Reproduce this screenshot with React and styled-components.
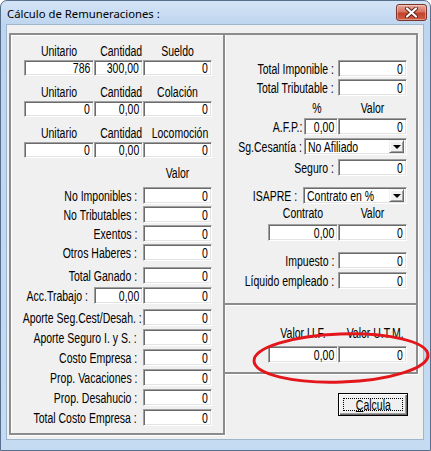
import React from "react";
import styled, { createGlobalStyle } from "styled-components";

const GlobalStyle = createGlobalStyle`
  html, body {
    margin: 0;
    padding: 0;
    background: #ffffff;
  }
  body {
    font-family: "Liberation Sans Narrow", "Arial Narrow", "Liberation Sans", sans-serif;
    font-size: 14px;
    color: #000;
  }
`;

// the dialog font is a tall narrow sans; squeeze Liberation Sans to its width
const narrow = (origin) => `
  display: inline-block;
  flex-shrink: 0;
  transform: scaleX(0.75);
  transform-origin: ${origin};
`;

const Window = styled.div`
  position: relative;
  width: 431px;
  height: 451px;
  box-sizing: border-box;
  border: 1px solid #556f8c;
  border-radius: 7px 7px 0 0;
  background: linear-gradient(to bottom, #d4e4f6 0px, #bed5ef 24px, #c4dbf2 100%);
  overflow: hidden;
`;

const TitleBar = styled.div`
  height: 24px;
  box-sizing: border-box;
  display: flex;
  align-items: flex-start;
  justify-content: space-between;
  padding: 3px 3px 0 6px;
`;

const Title = styled.span`
  font-family: "Noto Sans", "Open Sans", sans-serif;
  font-size: 11.3px;
  line-height: 20px;
`;

const CloseButton = styled.div`
  width: 31px;
  height: 17px;
  box-sizing: border-box;
  border: 1px solid #7a3327;
  border-radius: 3px;
  background: linear-gradient(to bottom, #e8aa9c 0%, #d7725f 45%, #c3432c 55%, #cf5d45 100%);
  box-shadow: inset 0 0 0 1px rgba(255, 255, 255, 0.35);
  display: flex;
  align-items: center;
  justify-content: center;
`;

const Client = styled.div`
  margin-left: 6px;
  width: 416px;
  height: 414px;
  box-sizing: border-box;
  background: #f0f0f0;
  box-shadow: 0 0 0 1px #9fb5cd;
  padding: 8px 0 0 2px;
  display: flex;
  align-items: flex-start;
`;

const LeftPanel = styled.div`
  width: 216px;
  height: 402px;
  box-sizing: border-box;
  border: 2px solid #8c8c8c;
  box-shadow: inset 1px 1px 0 #fff, 1px 1px 0 #fff;
  padding: 9px 11px 0 0;
  display: flex;
  flex-direction: column;
`;

const RightColumn = styled.div`
  width: 193px;
  display: flex;
  flex-direction: column;
`;

const RightBox = styled.div`
  height: ${(p) => p.$h}px;
  box-sizing: border-box;
  border-right: 2px solid #8c8c8c;
  border-bottom: 2px solid #8c8c8c;
  border-top: ${(p) => (p.$top ? "2px solid #8c8c8c" : "none")};
  box-shadow: 1px 1px 0 #fff;
  padding: ${(p) => p.$pt}px 9px 0 0;
  display: flex;
  flex-direction: column;
`;

const Headers = styled.div`
  display: grid;
  grid-template-columns: ${(p) => p.$cols};
  justify-content: end;
  margin-top: ${(p) => p.$mt || 0}px;
  line-height: 14px;
  height: 14px;
  white-space: nowrap;
`;

const Head = styled.span`
  ${narrow("center")}
  text-align: center;
  margin-left: ${(p) => p.$shift || 0}px;
`;

const Row = styled.div`
  display: flex;
  justify-content: flex-end;
  align-items: center;
  margin-top: ${(p) => p.$mt || 0}px;
`;

const Label = styled.span`
  ${narrow("right")}
  white-space: nowrap;
  margin-right: ${(p) => (p.$gap === undefined ? 6 : p.$gap)}px;
`;

const Field = styled.div`
  width: ${(p) => p.$w}px;
  height: ${(p) => p.$h || 17}px;
  flex-shrink: 0;
  box-sizing: border-box;
  background: #fff;
  border-top: 1px solid #a0a0a0;
  border-left: 1px solid #a0a0a0;
  border-right: 1px solid #fff;
  border-bottom: 1px solid #fff;
  box-shadow: inset 1px 1px 0 #6b6b6b, inset -1px -1px 0 #e3e3e3;
  display: flex;
  align-items: center;
  justify-content: flex-end;
  padding-right: 3px;
  white-space: nowrap;
  overflow: hidden;
`;

const Value = styled.span`
  ${narrow("right")}
`;

const Combo = styled(Field)`
  justify-content: space-between;
  padding: 0 2px 0 3px;
`;

const ComboText = styled.span`
  ${narrow("left")}
  flex: 1 1 0;
  min-width: 0;
`;

const DropButton = styled.div`
  width: 15px;
  height: 13px;
  flex-shrink: 0;
  box-sizing: border-box;
  background: #f0f0f0;
  border-top: 1px solid #f0f0f0;
  border-left: 1px solid #f0f0f0;
  border-right: 1px solid #696969;
  border-bottom: 1px solid #696969;
  box-shadow: inset 1px 1px 0 #fff, inset -1px -1px 0 #a0a0a0;
  display: flex;
  align-items: center;
  justify-content: center;
`;

const Arrow = styled.span`
  width: 0;
  height: 0;
  border-left: 4px solid transparent;
  border-right: 4px solid transparent;
  border-top: 4px solid #000;
  margin-top: 1px;
`;

const ButtonArea = styled.div`
  display: flex;
  justify-content: flex-end;
  padding: 19px 10px 0 0;
`;

const Button = styled.div`
  width: 70px;
  height: 23px;
  box-sizing: border-box;
  border: 1px solid #000;
  background: #f0f0f0;
  box-shadow: inset 1px 1px 0 #fff, inset -1px -1px 0 #696969, inset -2px -2px 0 #a0a0a0;
  padding: 4px;
  display: flex;
`;

const FocusRect = styled.div`
  flex: 1;
  border: 1px dotted #000;
  display: flex;
  align-items: center;
  justify-content: center;
`;

const ButtonText = styled.span`
  ${narrow("center")}
`;

const Overlay = styled.svg`
  position: absolute;
  left: 0;
  top: 0;
  pointer-events: none;
`;

const ValueRow = ({ label, value, mt, gap, pre }) => (
  <Row $mt={mt}>
    <Label $gap={gap}>{label}</Label>
    {pre !== undefined && (
      <Field $w={pre.w}>
        <Value>{pre.v}</Value>
      </Field>
    )}
    <Field $w={69}>
      <Value>{value}</Value>
    </Field>
  </Row>
);

const topGroups = [
  { heads: ["Unitario", "Cantidad", "Sueldo"], vals: ["786", "300,00", "0"], mt: 0 },
  { heads: ["Unitario", "Cantidad", "Colación"], vals: ["0", "0,00", "0"], mt: 9 },
  { heads: ["Unitario", "Cantidad", "Locomoción"], vals: ["0", "0,00", "0"], mt: 9 },
];

const leftRows = [
  { label: "No Imponibles :", mt: 7 },
  { label: "No Tributables :", mt: 2 },
  { label: "Exentos :", mt: 2 },
  { label: "Otros Haberes :", mt: 2 },
  { label: "Total Ganado :", mt: 6 },
  { label: "Acc.Trabajo :", mt: 3, pre: { w: 49, v: "0,00" } },
  { label: "Aporte Seg.Cest/Desah. :", mt: 5, gap: 1 },
  { label: "Aporte Seguro I. y S. :", mt: 3 },
  { label: "Costo Empresa :", mt: 3 },
  { label: "Prop. Vacaciones :", mt: 3 },
  { label: "Prop. Desahucio :", mt: 3 },
  { label: "Total Costo Empresa :", mt: 3 },
];

export default function App() {
  return (
    <>
      <GlobalStyle />
      <Window>
        <TitleBar>
          <Title>Cálculo de Remuneraciones :</Title>
          <CloseButton>
            <svg width="13" height="11" viewBox="0 0 13 11">
              <path d="M2 1.5 L11 9.5 M11 1.5 L2 9.5" stroke="#5a2219" strokeWidth="4" strokeLinecap="round" />
              <path d="M2 1.5 L11 9.5 M11 1.5 L2 9.5" stroke="#fff" strokeWidth="2.2" strokeLinecap="round" />
            </svg>
          </CloseButton>
        </TitleBar>
        <Client>
          <LeftPanel>
            {topGroups.map((g, i) => (
              <React.Fragment key={i}>
                <Headers $cols="70px 49px 69px" $mt={g.mt}>
                  {g.heads.map((h) => (
                    <Head key={h}>{h}</Head>
                  ))}
                </Headers>
                <Row $mt={2}>
                  {g.vals.map((v, j) => (
                    <Field key={j} $w={[70, 49, 69][j]} $h={16}>
                      <Value>{v}</Value>
                    </Field>
                  ))}
                </Row>
              </React.Fragment>
            ))}
            <Headers $cols="69px" $mt={8}>
              <Head>Valor</Head>
            </Headers>
            {leftRows.map((r) => (
              <ValueRow key={r.label} label={r.label} value="0" mt={r.mt} gap={r.gap} pre={r.pre} />
            ))}
          </LeftPanel>
          <RightColumn>
            <RightBox $h={272} $pt={25} $top>
              <ValueRow label="Total Imponible :" value="0" gap={4} />
              <ValueRow label="Total Tributable :" value="0" mt={2} gap={4} />
              <Headers $cols="34px 69px" $mt={5}>
                <Head $shift={-8}>%</Head>
                <Head>Valor</Head>
              </Headers>
              <ValueRow label="A.F.P.:" value="0" mt={3} gap={2} pre={{ w: 34, v: "0,00" }} />
              <Row $mt={3}>
                <Label $gap={2}>Sg.Cesantía :</Label>
                <Combo $w={103}>
                  <ComboText>No Afiliado</ComboText>
                  <DropButton>
                    <Arrow />
                  </DropButton>
                </Combo>
              </Row>
              <ValueRow label="Seguro :" value="0" mt={4} gap={4} />
              <Row $mt={11}>
                <Label $gap={6}>ISAPRE :</Label>
                <Combo $w={104}>
                  <ComboText>Contrato en %</ComboText>
                  <DropButton>
                    <Arrow />
                  </DropButton>
                </Combo>
              </Row>
              <Headers $cols="70px 69px" $mt={2}>
                <Head>Contrato</Head>
                <Head>Valor</Head>
              </Headers>
              <Row $mt={4}>
                <Field $w={70}>
                  <Value>0,00</Value>
                </Field>
                <Field $w={69}>
                  <Value>0</Value>
                </Field>
              </Row>
              <ValueRow label="Impuesto :" value="0" mt={11} gap={4} />
              <ValueRow label="Líquido empleado :" value="0" mt={3} gap={4} />
            </RightBox>
            <RightBox $h={69} $pt={21}>
              <Headers $cols="70px 69px">
                <Head>Valor U.F.</Head>
                <Head>Valor U.T.M.</Head>
              </Headers>
              <Row $mt={6}>
                <Field $w={70}>
                  <Value>0,00</Value>
                </Field>
                <Field $w={69}>
                  <Value>0</Value>
                </Field>
              </Row>
            </RightBox>
            <ButtonArea>
              <Button>
                <FocusRect>
                  <ButtonText>
                    <u>C</u>alcula
                  </ButtonText>
                </FocusRect>
              </Button>
            </ButtonArea>
          </RightColumn>
        </Client>
        <Overlay width="431" height="451" viewBox="0 0 431 451">
          <ellipse
            cx="340"
            cy="357"
            rx="87"
            ry="24"
            fill="none"
            stroke="#e3161b"
            strokeWidth="3"
            transform="rotate(-2 340 357)"
          />
        </Overlay>
      </Window>
    </>
  );
}
